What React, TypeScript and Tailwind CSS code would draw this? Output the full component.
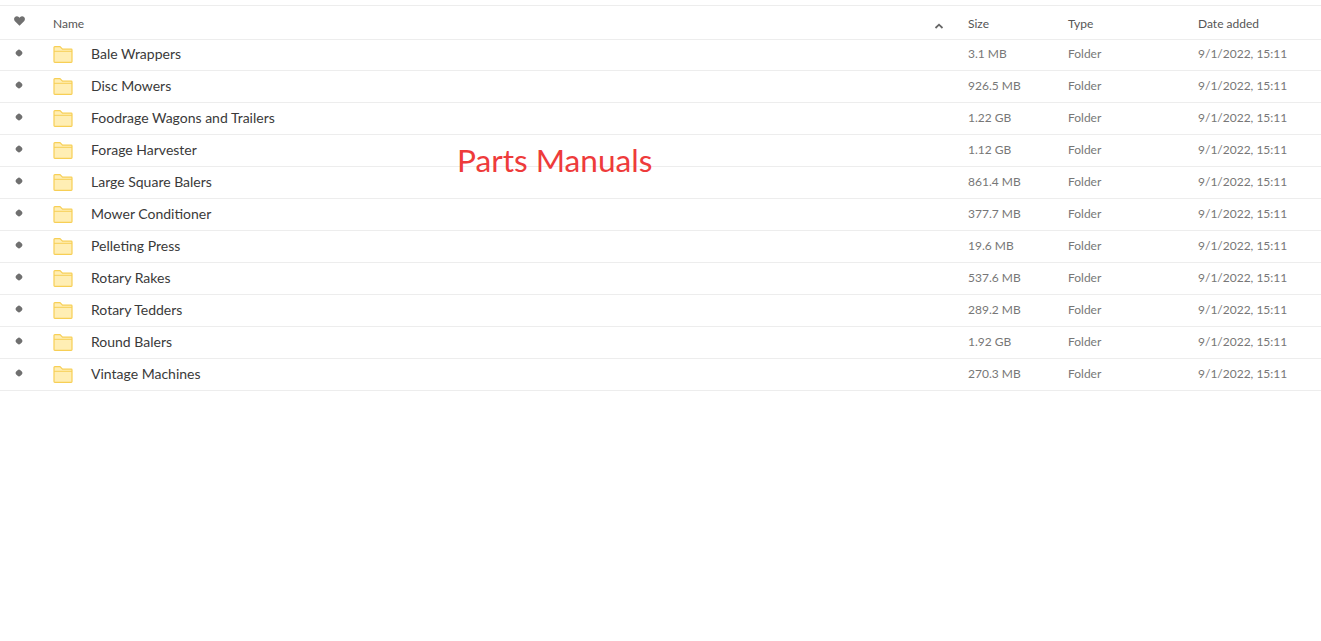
const rows = [
  { name: 'Bale Wrappers', size: '3.1 MB' },
  { name: 'Disc Mowers', size: '926.5 MB' },
  { name: 'Foodrage Wagons and Trailers', size: '1.22 GB' },
  { name: 'Forage Harvester', size: '1.12 GB' },
  { name: 'Large Square Balers', size: '861.4 MB' },
  { name: 'Mower Conditioner', size: '377.7 MB' },
  { name: 'Pelleting Press', size: '19.6 MB' },
  { name: 'Rotary Rakes', size: '537.6 MB' },
  { name: 'Rotary Tedders', size: '289.2 MB' },
  { name: 'Round Balers', size: '1.92 GB' },
  { name: 'Vintage Machines', size: '270.3 MB' },
];

function FolderIcon() {
  return (
    <svg width="20" height="17" viewBox="0 0 20 17" className="shrink-0">
      <path d="M1 15.500V1.500C1 1 1.300 0.700 1.800 0.700H7L9.500 3.200H18.300C18.800 3.200 19 3.500 19 4V15.500C19 16 18.800 16.300 18.300 16.300H1.800C1.300 16.300 1 16 1 15.500Z" fill="#ffeeb4" stroke="#f7cf55" strokeWidth="1.200" />
      <path d="M1 5.300H19" stroke="#f7cf55" strokeWidth="1" />
    </svg>
  );
}

export default function App() {
  return (
    <div className="relative h-[641px] bg-white pt-[5px] font-['Lato',sans-serif] overflow-hidden">
      <div className="flex h-[35px] border-y border-[#ededed] text-[12px] text-[#555]">
        <div className="w-[53px] pl-[14px] pt-[10px]">
          <svg width="11" height="10" viewBox="0 0 12 11">
            <path d="M6 10.800 1 5.800C-0.300 4.400-0.200 2.400 0.800 1.300 2 0 4.200 0 5.200 1.200L6 2 6.800 1.200C7.800 0 10 0 11.200 1.300 12.200 2.400 12.300 4.400 11 5.800Z" fill="#707070" />
          </svg>
        </div>
        <div className="flex-1 pt-[9px]">Name</div>
        <div className="w-[35px] pt-[17px] pl-[1px]">
          <svg width="10" height="6" viewBox="0 0 10 6">
            <path d="M1.500 5 5 1.700 8.500 5" fill="none" stroke="#666" strokeWidth="1.800" />
          </svg>
        </div>
        <div className="w-[100px] pt-[9px]">Size</div>
        <div className="w-[130px] pt-[9px]">Type</div>
        <div className="w-[123px] pt-[9px]">Date added</div>
      </div>
      {rows.map((row, i) => (
        <div key={i} className={`flex h-[32px] items-center border-b border-[#ededed] ${i === 0 ? '-mt-[1px]' : ''}`}>
          <div className="w-[53px] pl-[16px]">
            <div className="h-[6px] w-[6px] -translate-y-[2px] rotate-45 rounded-[2px] bg-[#707070]" />
          </div>
          <FolderIcon />
          <div className="ml-[18px] flex-1 -translate-y-[1px] text-[14px] text-[#3a3a3a]">{row.name}</div>
          <div className="w-[100px] -translate-y-[1px] text-[12px] text-[#777]">{row.size}</div>
          <div className="w-[130px] -translate-y-[1px] text-[12px] text-[#777]">Folder</div>
          <div className="w-[123px] -translate-y-[1px] text-[12px] text-[#777]">9/1/2022, 15:11</div>
        </div>
      ))}
      <div className="absolute left-[457px] top-[141px] text-[31.600px] leading-[38px] text-[#ee3b3b]">Parts Manuals</div>
    </div>
  );
}
